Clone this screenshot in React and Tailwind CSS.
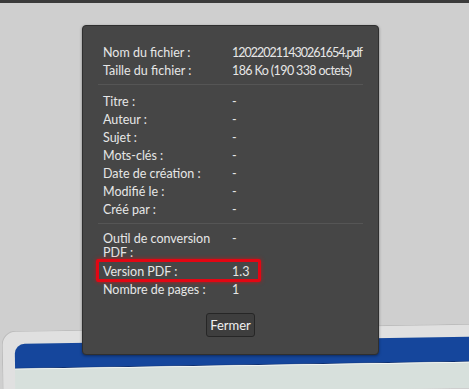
const rowsTop = [
  ['Nom du fichier :', '120220211430261654.pdf', 'tracking-[-1px]'],
  ['Taille du fichier :', '186 Ko (190\u202f338 octets)', 'tracking-[-0.6px]'],
];

const rowsMeta = [
  ['Titre :', '-'],
  ['Auteur :', '-'],
  ['Sujet :', '-'],
  ['Mots-clés :', '-'],
  ['Date de création :', '-'],
  ['Modifié le :', '-'],
  ['Créé par :', '-'],
];

const Row = ({ label, value, highlight, valueClass = '' }) => (
  <div className="relative flex">
    <div className="w-[121px] shrink-0">{label}</div>
    <div className={`ml-[8px] whitespace-nowrap ${valueClass}`}>{value}</div>
    {highlight && (
      <div className="pointer-events-none absolute left-[-7px] top-[-4px] w-[165px] h-[23px] border-[3px] border-[#e30613] rounded-[2px] shadow-[0_0_4px_rgba(255,0,0,0.6)]" />
    )}
  </div>
);

const Separator = () => <div className="mx-[-5px] h-px bg-[#262626] border-b border-[#555]" />;

export default function App() {
  return (
    <div className="relative w-[469px] h-[389px] overflow-hidden bg-[#cfcfcf] flex flex-col font-['Lato',sans-serif]">
      <div className="h-[3px] bg-[#3b3b3b]" />
      <div className="flex-1" />

      {/* Laptop screen in the background */}
      <div className="h-[64px] ml-[2px] mr-[-10px] mb-[-6px] rotate-[-0.9deg] origin-left">
        <div className="h-full bg-[#e0e0e0] rounded-tl-[14px] border-t border-l border-[#bdbdbd] pl-[12px] pt-[12px]">
          <div className="h-full bg-[#d9e2dd] rounded-tl-[10px] flex flex-col">
            <div className="h-[25px] bg-[#15469c] rounded-tl-[10px] border-b border-[#0d2f70]" />
            <div className="h-px bg-[#f2f5f4]" />
            <div className="flex-1 bg-[#d7e0dc]" />
          </div>
        </div>
      </div>

      {/* Properties dialog */}
      <div className="absolute left-[82px] top-[25px] w-[297px] h-[330px] bg-[#464646] border border-[#2f2f2f] rounded-[4px] shadow-[0_1px_3px_rgba(0,0,0,0.4)] px-[20px] pt-[18px] text-[12.5px] leading-[18px] text-[#e6e6e6] flex flex-col">
        {rowsTop.map(([l, v, c]) => (
          <Row key={l} label={l} value={v} valueClass={c} />
        ))}
        <div className="mt-[4px] mb-[8px]">
          <Separator />
        </div>
        {rowsMeta.map(([l, v]) => (
          <Row key={l} label={l} value={v} />
        ))}
        <div className="mt-[4px] mb-[8px]">
          <Separator />
        </div>
        <div className="flex leading-[14px] pb-[3px]">
          <div className="w-[110px] shrink-0">Outil de conversion PDF :</div>
          <div className="ml-[19px]">-</div>
        </div>
        <Row label="Version PDF :" value="1.3" highlight />
        <Row label="Nombre de pages :" value="1" />
        <div className="mt-[14px] flex justify-center">
          <button className="w-[49px] h-[24px] bg-[#3e3e3e] border border-[#262626] rounded-[3px] text-[13px] text-[#f0f0f0] leading-none">
            Fermer
          </button>
        </div>
      </div>
    </div>
  );
}
